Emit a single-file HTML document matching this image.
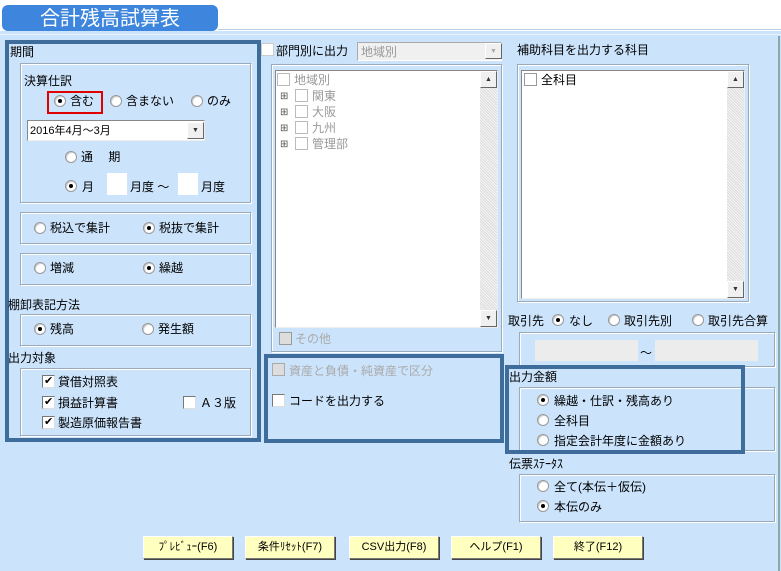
<!DOCTYPE html>
<html><head><meta charset="utf-8"><style>
*{margin:0;padding:0;box-sizing:border-box}
body{width:781px;height:571px;background:#cbe3fb;position:relative;overflow:hidden;font-family:"Liberation Sans","Noto Sans CJK JP",sans-serif;font-size:12px;color:#000}
.a{position:absolute;white-space:nowrap;line-height:14px}
.pn{position:absolute;border:1px solid #9ab;border-right-color:#fff;border-bottom-color:#fff;box-shadow:inset -1px -1px 0 #9ab,inset 1px 1px 0 #fff}
.dk{position:absolute;border:4px solid #3f6d9b}
.r{position:absolute;width:12px;height:12px;border-radius:50%;background:#fff;border:1px solid #999;box-shadow:inset 1px 1px 0 #ccc}
.r.on::after{content:"";position:absolute;left:3px;top:3px;width:4px;height:4px;border-radius:50%;background:#000}
.c{position:absolute;width:13px;height:13px;background:#fff;border:1px solid #777;border-right-color:#ddd;border-bottom-color:#ddd}
.c.on::after{content:"✔";position:absolute;left:1px;top:-2px;font-size:11px}
.wb{position:absolute;background:#fff;border:1px solid #888;border-right-color:#eee;border-bottom-color:#eee}
.sb{position:absolute;width:17px;background:repeating-linear-gradient(45deg,#ddd 0 1px,#f4f4f4 1px 2px)}
.sa{position:absolute;width:17px;height:17px;background:#f0f0f0;border:1px solid #fff;border-right-color:#666;border-bottom-color:#666;font-size:7px;text-align:center;line-height:15px;color:#333}
.btn{position:absolute;top:536px;height:23px;width:90px;background:#ffffc0;border:1px solid #fff;border-right-color:#777;border-bottom-color:#777;box-shadow:1px 1px 0 #444;text-align:center;line-height:21px;font-size:11px}
.g{color:#999}
.inp{position:absolute;background:#fff}
</style></head><body>
<div style="position:absolute;left:0;top:0;width:781px;height:33px;background:#fff"></div>
<div style="position:absolute;left:2px;top:5px;width:216px;height:26px;background:#3d85dd;border-radius:6px"></div>
<div class="a" style="left:40px;top:7px;color:#fff;font-size:20px;line-height:24px">合計残高試算表</div>
<div style="position:absolute;left:0;top:31px;width:781px;height:2px;background:#cbe3fb"></div>
<div style="position:absolute;left:218px;top:29px;width:563px;height:1px;background:#b8d0e8"></div>
<div style="position:absolute;left:0;top:34px;width:781px;height:1px;background:#e8f2fc"></div>

<!-- left -->
<div class="dk" style="left:5px;top:40px;width:256px;height:402px"></div>
<div class="a" style="left:10px;top:45px">期間</div>
<div class="pn" style="left:20px;top:63px;width:232px;height:141px"></div>
<div class="a" style="left:24px;top:74px">決算仕訳</div>
<div style="position:absolute;left:47px;top:91px;width:56px;height:23px;border:2px solid #e00000"></div>
<div class="r on" style="left:54px;top:95px"></div><div class="a" style="left:70px;top:94px">含む</div>
<div class="r" style="left:110px;top:95px"></div><div class="a" style="left:126px;top:94px">含まない</div>
<div class="r" style="left:191px;top:95px"></div><div class="a" style="left:207px;top:94px">のみ</div>
<div class="wb" style="left:27px;top:120px;width:178px;height:21px"></div>
<div class="a" style="left:30px;top:124px;font-size:11px">2016年4月～3月</div>
<div class="sa" style="left:187px;top:122px">▼</div>
<div class="r" style="left:65px;top:151px"></div><div class="a" style="left:81px;top:150px">通　 期</div>
<div class="r on" style="left:65px;top:180px"></div><div class="a" style="left:82px;top:180px">月</div>
<div class="inp" style="left:107px;top:173px;width:20px;height:22px"></div>
<div class="a" style="left:130px;top:180px">月度 ～</div>
<div class="inp" style="left:178px;top:173px;width:20px;height:22px"></div>
<div class="a" style="left:201px;top:180px">月度</div>

<div class="pn" style="left:20px;top:212px;width:232px;height:33px"></div>
<div class="r" style="left:34px;top:222px"></div><div class="a" style="left:50px;top:221px">税込で集計</div>
<div class="r on" style="left:143px;top:222px"></div><div class="a" style="left:159px;top:221px">税抜で集計</div>
<div class="pn" style="left:20px;top:253px;width:232px;height:33px"></div>
<div class="r" style="left:34px;top:262px"></div><div class="a" style="left:50px;top:261px">増減</div>
<div class="r on" style="left:143px;top:262px"></div><div class="a" style="left:159px;top:261px">繰越</div>
<div class="a" style="left:8px;top:298px">棚卸表記方法</div>
<div class="pn" style="left:20px;top:314px;width:232px;height:33px"></div>
<div class="r on" style="left:34px;top:323px"></div><div class="a" style="left:50px;top:322px">残高</div>
<div class="r" style="left:142px;top:323px"></div><div class="a" style="left:158px;top:322px">発生額</div>
<div class="a" style="left:8px;top:351px">出力対象</div>
<div class="pn" style="left:20px;top:368px;width:232px;height:69px"></div>
<div class="c on" style="left:42px;top:375px"></div><div class="a" style="left:58px;top:375px">貸借対照表</div>
<div class="c on" style="left:42px;top:396px"></div><div class="a" style="left:58px;top:396px">損益計算書</div>
<div class="c on" style="left:42px;top:416px"></div><div class="a" style="left:58px;top:416px">製造原価報告書</div>
<div class="c" style="left:183px;top:396px"></div><div class="a" style="left:200px;top:396px">Ａ３版</div>

<!-- middle -->
<div class="c" style="left:261px;top:43px;border-color:#ccc"></div><div class="a" style="left:276px;top:44px">部門別に出力</div>
<div style="position:absolute;left:357px;top:42px;width:145px;height:19px;background:#f0f0f0;border:1px solid #aaa;border-right-color:#fff;border-bottom-color:#fff"></div>
<div class="a g" style="left:361px;top:45px">地域別</div>
<div class="sa" style="left:485px;top:43px;height:16px;color:#aaa">▼</div>
<div class="pn" style="left:271px;top:64px;width:232px;height:289px"></div>
<div class="wb" style="left:275px;top:70px;width:223px;height:258px"></div>
<div class="sb" style="left:480px;top:71px;height:256px"></div>
<div class="sa" style="left:480px;top:71px">▲</div><div class="sa" style="left:480px;top:310px">▼</div>
<div class="c" style="left:277px;top:73px;border-color:#bbb"></div><div class="a g" style="left:294px;top:73px">地域別</div>
<div class="a" style="left:280px;top:89px;font-size:10px;line-height:16px;color:#555">⊞<br>⊞<br>⊞<br>⊞</div>
<div class="c" style="left:295px;top:89px;border-color:#bbb"></div><div class="a g" style="left:312px;top:89px">関東</div>
<div class="c" style="left:295px;top:105px;border-color:#bbb"></div><div class="a g" style="left:312px;top:105px">大阪</div>
<div class="c" style="left:295px;top:121px;border-color:#bbb"></div><div class="a g" style="left:312px;top:121px">九州</div>
<div class="c" style="left:295px;top:137px;border-color:#bbb"></div><div class="a g" style="left:312px;top:137px">管理部</div>
<div class="c" style="left:279px;top:332px;background:#ddd;border-color:#999"></div><div class="a g" style="left:295px;top:332px;color:#aaa">その他</div>
<div class="dk" style="left:264px;top:354px;width:240px;height:89px"></div>
<div class="c" style="left:272px;top:363px;background:#ddd;border-color:#aaa"></div><div class="a" style="left:289px;top:364px;color:#aaa">資産と負債・純資産で区分</div>
<div class="c" style="left:272px;top:394px"></div><div class="a" style="left:289px;top:394px">コードを出力する</div>

<!-- right -->
<div class="a" style="left:517px;top:43px">補助科目を出力する科目</div>
<div class="pn" style="left:517px;top:64px;width:233px;height:239px"></div>
<div class="wb" style="left:521px;top:70px;width:224px;height:229px"></div>
<div class="sb" style="left:727px;top:71px;height:227px"></div>
<div class="sa" style="left:727px;top:71px">▲</div><div class="sa" style="left:727px;top:281px">▼</div>
<div class="c" style="left:524px;top:73px;border-color:#999"></div><div class="a" style="left:541px;top:73px">全科目</div>
<div class="a" style="left:508px;top:314px">取引先</div>
<div class="r on" style="left:552px;top:314px"></div><div class="a" style="left:569px;top:314px">なし</div>
<div class="r" style="left:608px;top:314px"></div><div class="a" style="left:624px;top:314px">取引先別</div>
<div class="r" style="left:692px;top:314px"></div><div class="a" style="left:708px;top:314px">取引先合算</div>
<div class="pn" style="left:519px;top:332px;width:257px;height:36px"></div>
<div style="position:absolute;left:535px;top:340px;width:103px;height:21px;background:#ececec"></div>
<div class="a" style="left:640px;top:346px">～</div>
<div style="position:absolute;left:655px;top:340px;width:103px;height:21px;background:#ececec"></div>
<div class="pn" style="left:519px;top:387px;width:257px;height:65px"></div>
<div class="dk" style="left:505px;top:365px;width:240px;height:89px"></div>
<div class="a" style="left:509px;top:370px">出力金額</div>
<div class="r on" style="left:537px;top:394px"></div><div class="a" style="left:554px;top:394px">繰越・仕訳・残高あり</div>
<div class="r" style="left:537px;top:414px"></div><div class="a" style="left:554px;top:414px">全科目</div>
<div class="r" style="left:537px;top:434px"></div><div class="a" style="left:554px;top:434px">指定会計年度に金額あり</div>
<div class="a" style="left:509px;top:457px">伝票ｽﾃｰﾀｽ</div>
<div class="pn" style="left:519px;top:474px;width:257px;height:49px"></div>
<div class="r" style="left:537px;top:480px"></div><div class="a" style="left:554px;top:480px">全て(本伝＋仮伝)</div>
<div class="r on" style="left:537px;top:500px"></div><div class="a" style="left:554px;top:500px">本伝のみ</div>
<div style="position:absolute;left:778px;top:36px;width:2px;height:535px;background:#8aa"></div>

<div class="btn" style="left:143px">ﾌﾟﾚﾋﾞｭｰ(F6)</div>
<div class="btn" style="left:245px">条件ﾘｾｯﾄ(F7)</div>
<div class="btn" style="left:349px">CSV出力(F8)</div>
<div class="btn" style="left:451px">ヘルプ(F1)</div>
<div class="btn" style="left:553px">終了(F12)</div>
</body></html>
